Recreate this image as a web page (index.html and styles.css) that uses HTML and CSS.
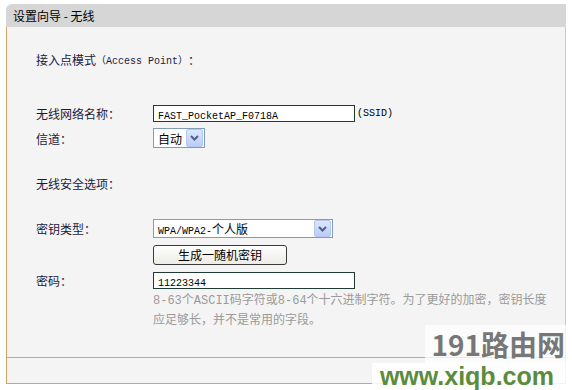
FILE: index.html
```html
<!DOCTYPE html>
<html>
<head>
  <title>设置向导 - 无线</title>
  <link rel="stylesheet" href="styles.css">
</head>
<body>
  <div class="wizard">
    <div class="title">设置向导 - 无线</div>
    <div class="panel">
      <div class="row heading">接入点模式 <span class="mono">（Access Point）</span>：</div>

      <div class="row ssid-row">
        <span class="label">无线网络名称：</span>
        <div class="textbox wide"><span class="mono">FAST_PocketAP_F0718A</span></div>
        <span class="mono suffix">(SSID)</span>
      </div>

      <div class="row channel-row">
        <span class="label">信道：</span>
        <div class="select narrow">
          <span class="value">自动</span>
          <span class="arrow"><svg width="9" height="6" viewBox="0 0 9 6"><path d="M1 1 L4.5 4.5 L8 1" fill="none" stroke="#4d6185" stroke-width="2"/></svg></span>
        </div>
      </div>

      <div class="row security-row">无线安全选项：</div>

      <div class="row keytype-row">
        <span class="label">密钥类型：</span>
        <div class="select long">
          <span class="value"><span class="mono">WPA/WPA2-</span>个人版</span>
          <span class="arrow"><svg width="9" height="6" viewBox="0 0 9 6"><path d="M1 1 L4.5 4.5 L8 1" fill="none" stroke="#4d6185" stroke-width="2"/></svg></span>
        </div>
      </div>

      <div class="row button-row">
        <span class="label"></span>
        <button class="gen-btn">生成一随机密钥</button>
      </div>

      <div class="row password-row">
        <span class="label">密码：</span>
        <div class="textbox wide"><span class="mono">11223344</span></div>
      </div>

      <div class="row help-row">
        <span class="label"></span>
        <p class="help">8-63个ASCII码字符或8-64个十六进制字符。为了更好的加密，密钥长度应足够长，并不是常用的字段。</p>
      </div>
    </div>
    <div class="footer"></div>
  </div>

  <div class="watermark">
    <div class="wm-top">191路由网</div>
    <div class="wm-bottom">www.xiqb.com</div>
  </div>
</body>
</html>
```

FILE: styles.css
```css
/* Wireless setup wizard page */
body {
  margin: 0;
  background-color: #fff;
  font-family: "Noto Sans CJK SC", "Liberation Sans", sans-serif;
  font-size: 12px;
  color: #1a1a40;
}

.mono {
  font-family: "Liberation Mono", "Noto Sans CJK SC", monospace;
  font-size: 10px;
}

.wizard {
  margin: 4px 0 0 6px;
  width: 560px;
}

.title {
  height: 23px;
  line-height: 23px;
  padding-left: 7px;
  background-color: #d6d6d6;
  border-top-left-radius: 6px;
  color: #000;
}

.panel {
  height: 308px;
  padding-top: 22px;
  background-color: #f4f4f4;
  border-left: 1px solid #dba467;
  border-right: 1px solid #e8c48e;
}

.row {
  display: flex;
  align-items: center;
  padding-left: 29px;
}

.label {
  width: 117px;
  flex-shrink: 0;
}

.heading { height: 20px; }
.ssid-row { height: 19px; margin-top: 35px; }
.channel-row { height: 22px; margin-top: 4px; }
.security-row { height: 20px; margin-top: 24px; }
.keytype-row { height: 21px; margin-top: 25px; }
.button-row { height: 21px; margin-top: 5px; }
.password-row { height: 18px; margin-top: 6px; }
.help-row { margin-top: 2px; align-items: flex-start; }

.textbox {
  box-sizing: border-box;
  height: 17px;
  padding-left: 4px;
  border: 1px solid #203a34;
  background-color: #fff;
  line-height: 15px;
  color: #000;
}

.textbox.wide { width: 202px; }

.suffix {
  margin-left: 2px;
  color: #000;
}

.select {
  box-sizing: border-box;
  display: flex;
  align-items: center;
  justify-content: space-between;
  height: 20px;
  padding: 1px 1px 1px 4px;
  border: 1px solid #7f9db9;
  background-color: #fff;
  color: #000;
}

.select.narrow { width: 52px; }
.select.long { width: 180px; height: 19px; }

.arrow {
  display: flex;
  align-items: center;
  justify-content: center;
  width: 15px;
  height: 16px;
  border: 1px solid #b5c8f2;
  border-radius: 2px;
  background: linear-gradient(#dbe6fd, #b9cdf7);
}

.select.long .arrow { height: 15px; }

.gen-btn {
  box-sizing: border-box;
  width: 134px;
  height: 20px;
  padding: 0;
  border: 1px solid #3a3a3a;
  border-radius: 3px;
  background: linear-gradient(#ffffff, #ecebe4);
  font-family: "Noto Sans CJK SC", sans-serif;
  font-size: 12px;
  color: #000;
}

.help {
  margin: 0;
  width: 396px;
  line-height: 20px;
  font-family: "Liberation Mono", "Noto Sans CJK SC", monospace;
  color: #9a9a9a;
}

.footer {
  height: 25px;
  background-color: #f4f4f4;
  border: 1px solid #dba467;
  border-right-color: #e8c48e;
}

.watermark {
  position: absolute;
  left: 372px;
  top: 325px;
  width: 200px;
  height: 65px;
  text-align: right;
}

.wm-top {
  display: inline-block;
  margin-right: 4px;
  padding: 0 3px 0 6px;
  background-color: rgba(255, 255, 255, 0.75);
  font-family: "Noto Sans CJK SC", sans-serif;
  font-weight: bold;
  font-size: 28px;
  line-height: 38px;
  color: #777;
}

.wm-bottom {
  padding-right: 18px;
  background-color: rgba(255, 255, 255, 0.85);
  font-family: "Liberation Sans", sans-serif;
  font-weight: bold;
  font-size: 25px;
  line-height: 27px;
  color: #5b8c3c;
}
```
